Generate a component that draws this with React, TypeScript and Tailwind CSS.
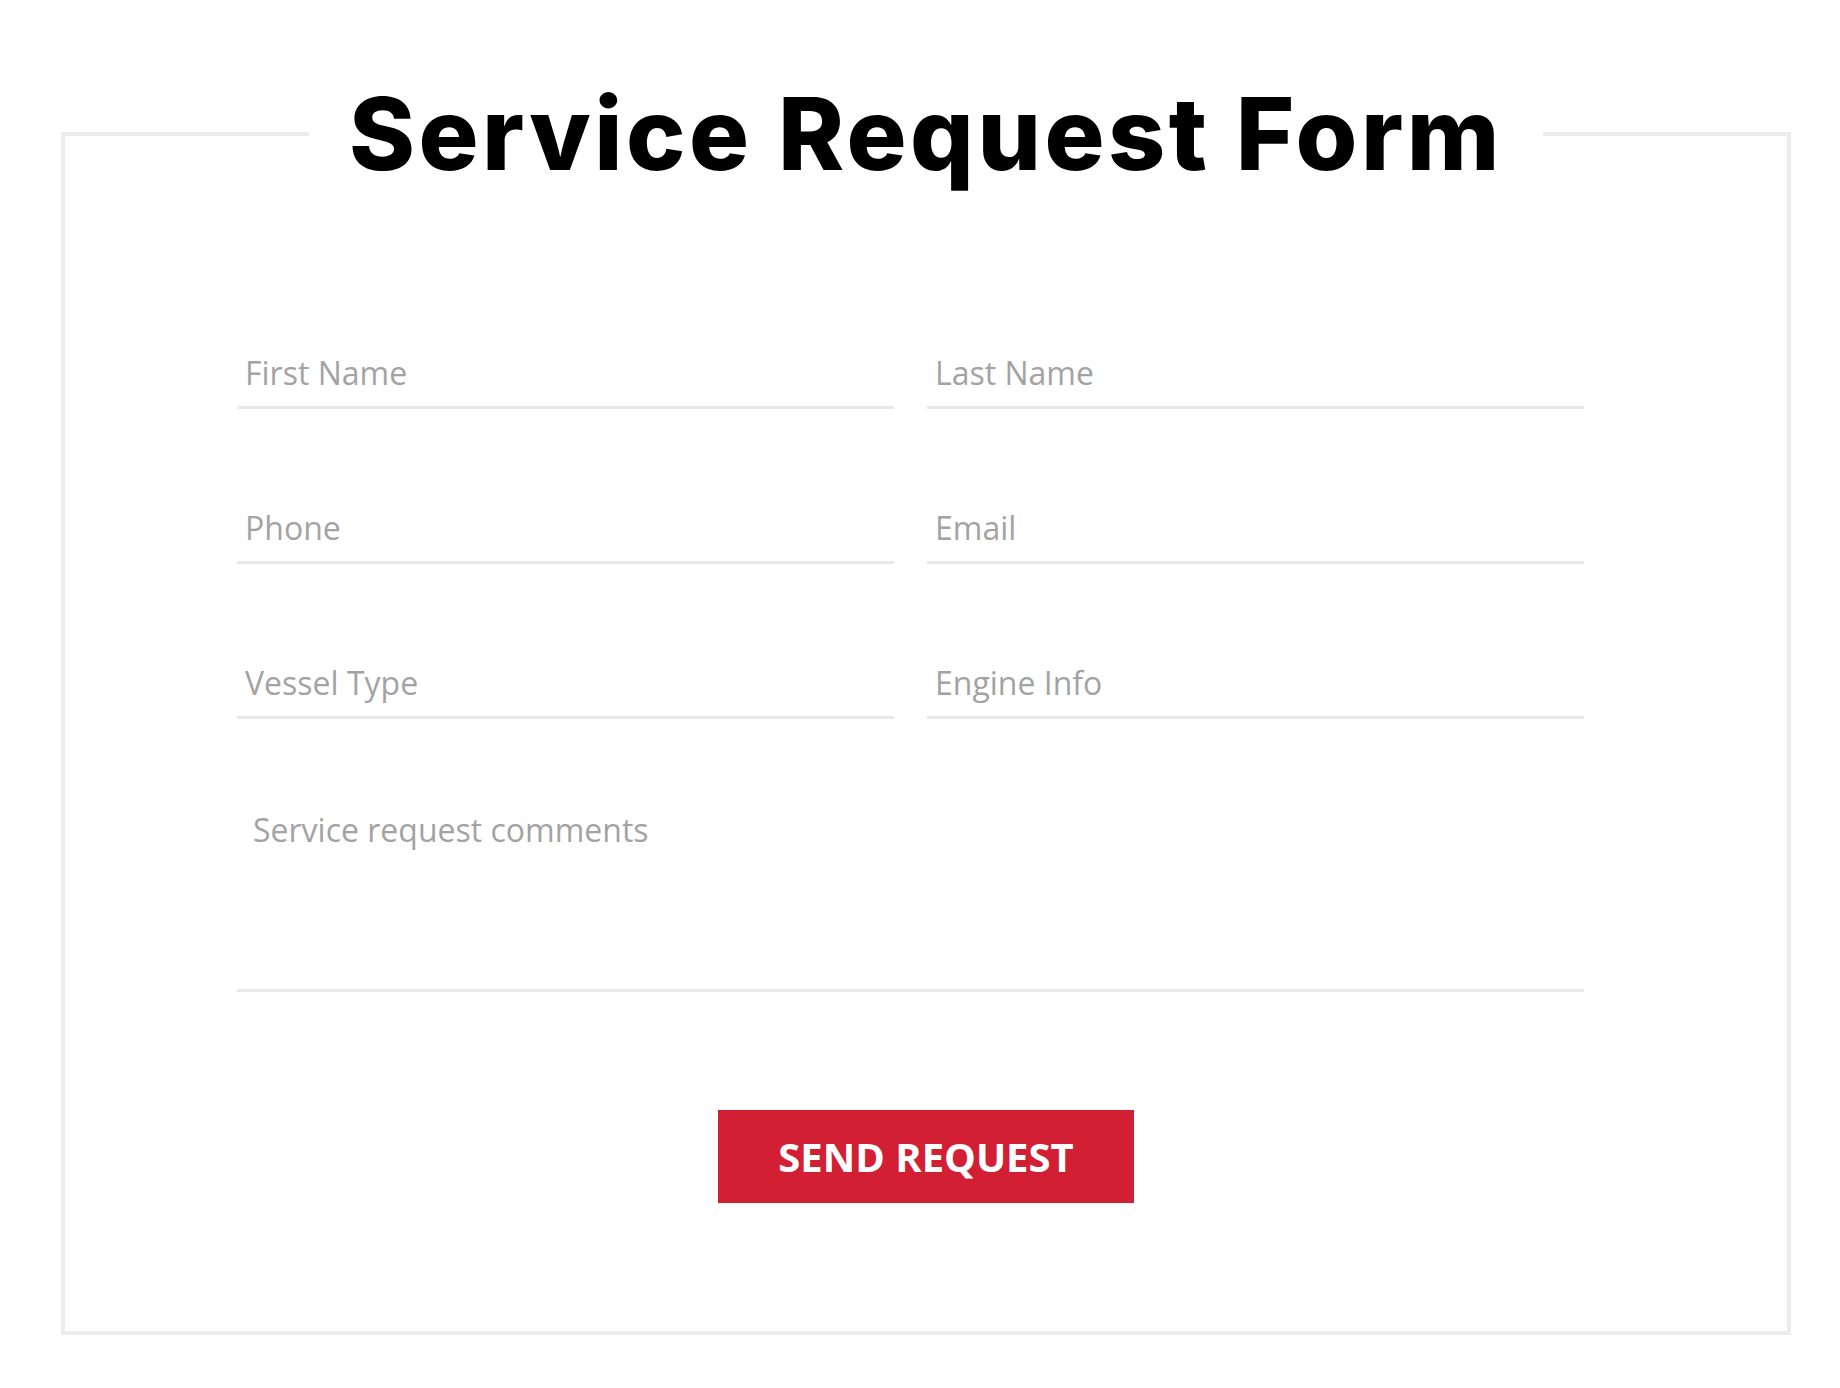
import type { ReactNode } from 'react';

const fields = [
  { name: 'firstName', label: 'First Name', type: 'text' },
  { name: 'lastName', label: 'Last Name', type: 'text' },
  { name: 'phone', label: 'Phone', type: 'tel' },
  { name: 'email', label: 'Email', type: 'email' },
  { name: 'vesselType', label: 'Vessel Type', type: 'text' },
  { name: 'engineInfo', label: 'Engine Info', type: 'text' },
];

function Field({ name, label, type }: { name: string; label: string; type: string }) {
  return (
    <input
      name={name}
      type={type}
      placeholder={label}
      aria-label={label}
      className="w-full bg-transparent pl-[8px] pr-[8px] pt-[11px] pb-[11px] text-[32px] leading-[44px] text-[#555] placeholder:text-[#a3a3a3] border-b-[3px] border-[#e9e9e9] outline-none"
    />
  );
}

function Frame({ title, children }: { title: string; children: ReactNode }) {
  return (
    <fieldset className="ml-[61px] w-[1730px] border-[4px] border-[#ececec]">
      <legend className="mx-auto px-[40px] text-[100px] leading-[100px] font-extrabold text-black tracking-[3.5px] font-['Inter','Liberation_Sans',sans-serif]">
        {title}
      </legend>
      {children}
    </fieldset>
  );
}

export default function App() {
  return (
    <div className="min-h-screen bg-white pt-[84px] font-['Open_Sans','Noto_Sans',sans-serif]">
      <Frame title="Service Request Form">
        <form onSubmit={(e) => e.preventDefault()}>
          <div className="ml-[172px] w-[1347px] pt-[156px]">
            <div className="grid grid-cols-2 gap-x-[33px] gap-y-[86px]">
              {fields.map((f) => <Field key={f.name} {...f} />)}
            </div>
            <textarea
              name="comments"
              placeholder="Service request comments"
              className="mt-[73px] block h-[200px] w-full resize-none bg-transparent px-[16px] pt-[16px] text-[32px] leading-[44px] text-[#555] placeholder:text-[#a3a3a3] border-b-[3px] border-[#e9e9e9] outline-none"
            />
          </div>
          <div className="flex justify-center pt-[118px] pb-[128px]">
            <button
              type="submit"
              className="h-[93px] w-[416px] bg-[#d21f33] text-[40px] font-bold uppercase text-white"
            >
              Send Request
            </button>
          </div>
        </form>
      </Frame>
    </div>
  );
}
